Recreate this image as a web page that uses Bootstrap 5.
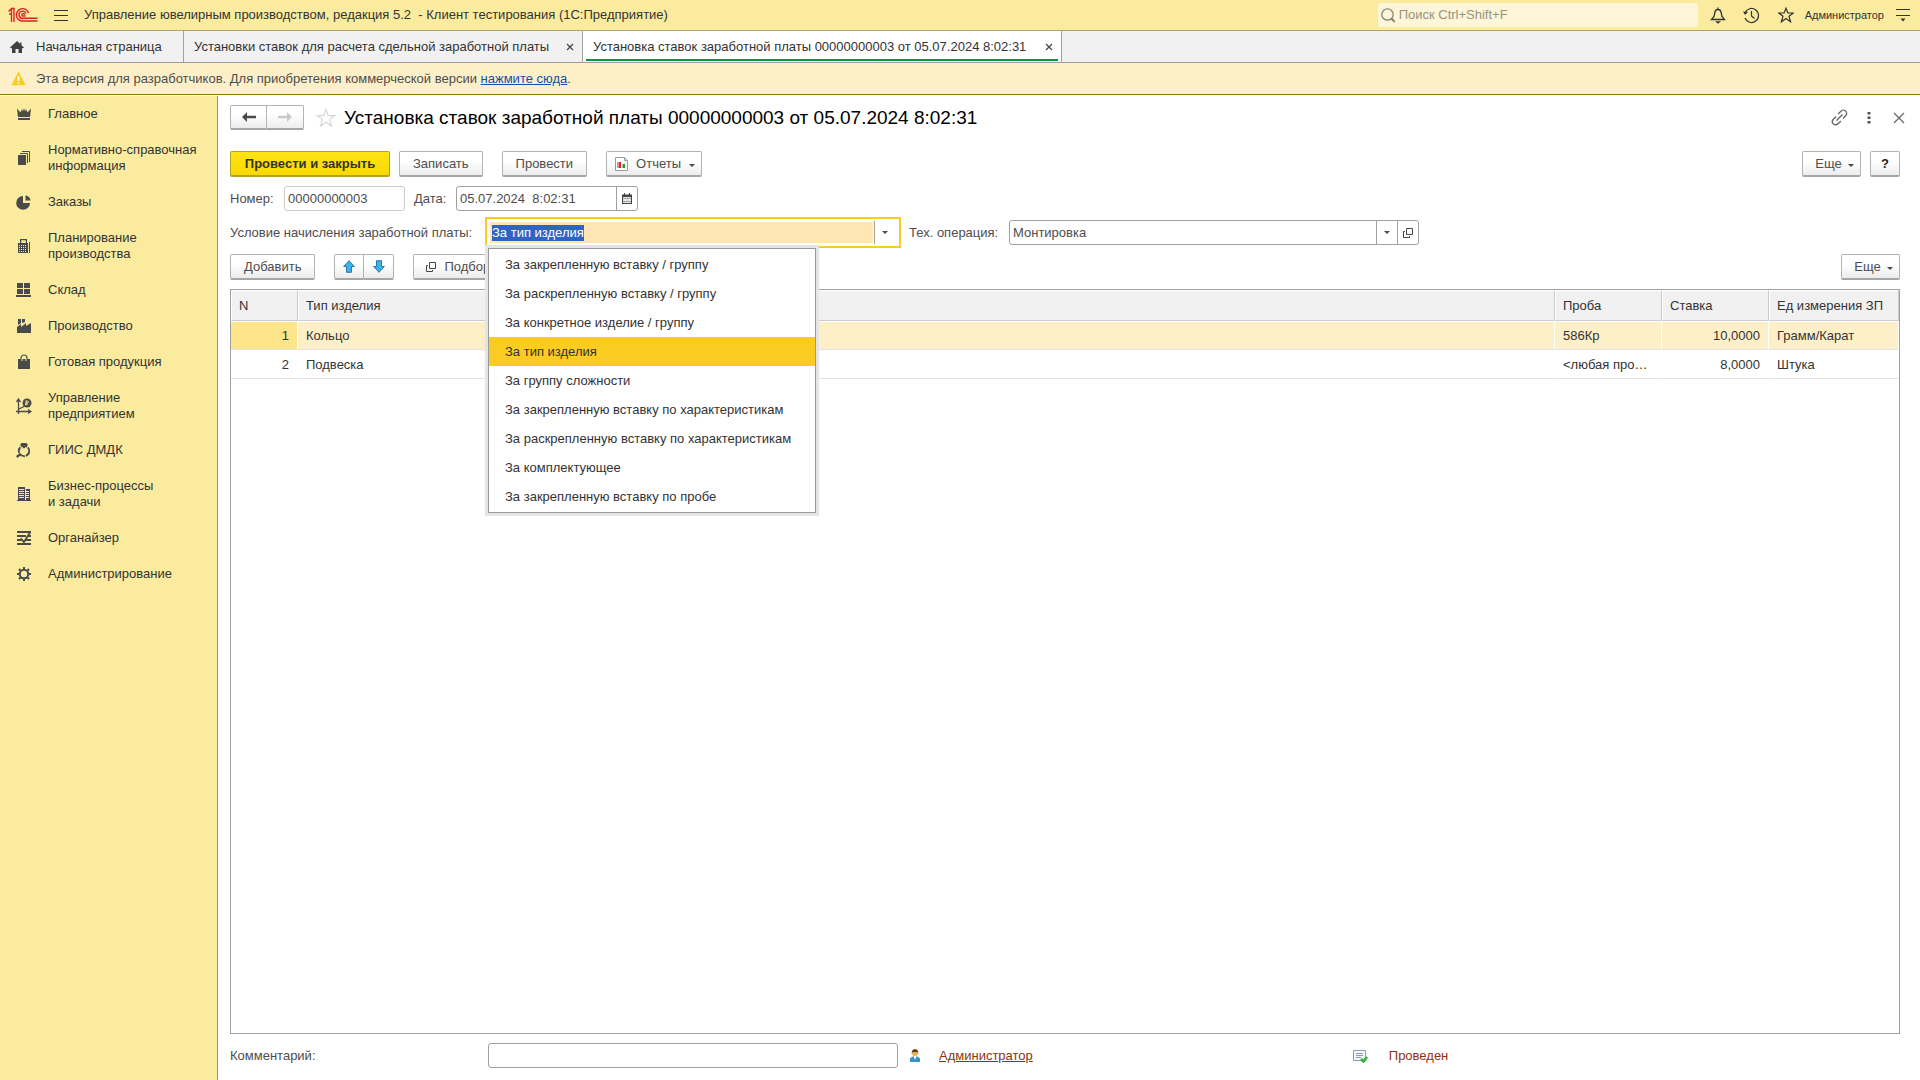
<!DOCTYPE html>
<html lang="ru">
<head>
<meta charset="utf-8">
<meta name="viewport" content="width=device-width, initial-scale=1">
<title>Управление ювелирным производством</title>
<link href="https://cdn.jsdelivr.net/npm/bootstrap@5.3.0/dist/css/bootstrap.min.css" rel="stylesheet">
<style>
:root{--ink:#333;--soft:#4d4d4d;--line:#a0a0a0;--yellow:#faeb9e;--accent:#facb20}
body{font:13px/16px "Liberation Sans",Arial,sans-serif;color:var(--ink);background:#fff}
svg{display:block;flex:none}
button,input{font:inherit;color:inherit}
.plain{background:none;border:0;padding:0;color:#404040}
.topbar{height:31px;background:var(--yellow);border-bottom:1px solid #b0a469;padding:0 10px 0 8px}
.search{width:320px;height:24px;background:#fdf6d8;border-radius:2px;padding-left:3px;margin-right:3px;color:#8c8770}
.search input{background:none;border:0;outline:0;padding:0;line-height:16px}
.search input::placeholder{color:#98937c;opacity:1}
.cell{width:34px;display:flex;justify-content:center;align-items:center}
.tools{margin-right:-14px}
.tools .cell{width:30px}
.user{font-size:11px;margin:0 12px 0 2px}
.tabs{height:32px;background:#f1f1f1;border-bottom:1px solid var(--line)}
.tab{position:relative;border-right:1px solid var(--line);color:var(--ink);text-decoration:none;min-width:184px;padding:0 8px 0 10px}
.tab-list{min-width:399px}
.tab-doc{min-width:479px}
.tab.active{background:#fff}
.tab.active::after{content:"";position:absolute;left:3px;right:3px;bottom:1px;height:2px;background:#009646}
.notice{height:32px;background:#fdf0c8;border-bottom:1px solid #94760f;padding-left:11px;gap:10px;color:var(--soft)}
.notice a{color:#1450a8}
.side{width:218px;background:var(--yellow);border-right:1px solid #9b9266;margin-top:1px}
.side a{display:flex;align-items:center;gap:16px;padding:10px 8px 10px 16px;color:var(--ink);text-decoration:none}
.side svg{fill:#4a4a4a}
.work{padding:10px 20px 12px 12px;min-width:0}
.after-title{margin-top:21px}
.form-row{margin-top:6px}
.gap-top{margin-top:9px}
.near{margin-left:9px}
.far{margin-left:19px}
.cmd{height:26px;padding:0 13px;border:1px solid #b3b3b3;border-bottom:2px solid #a6a6a6;border-radius:2px;background:linear-gradient(#fff 40%,#ececec);color:var(--soft);display:flex;align-items:center;justify-content:center;gap:6px;white-space:nowrap}
.cmd.main{background:linear-gradient(#ffe313,#f8d800);border-color:#b3a125;color:var(--ink);font-weight:700;width:160px}
.cmd.more{width:59px;padding:0 0 0 6px}
.cmd.help{width:30px;padding:0;color:#222;font-weight:700}
.cmd.pic{padding:0 6px 0 8px;gap:8px}
.arrow{border:3px solid transparent;border-top-color:#4a4a4a;border-bottom:0}
.cmd .arrow{margin-top:3px}
.pair .cmd{width:30px;padding:0}
.pair .cmd:first-child{border-radius:2px 0 0 2px}
.pair .cmd:last-child{border-left:0;border-radius:0 2px 2px 0}
.nav-pair .cmd{width:37px;height:25px}
.doc-title{font-size:19px;line-height:22px;font-weight:400;color:#000;margin:0}
.label{color:var(--soft);white-space:nowrap}
.label-num{width:46px}
.label-date{width:34px}
.label-cond{width:247px}
.label-op{width:92px}
.label-note{width:258px}
.box{height:25px;border:1px solid var(--line);border-radius:3px;background:#fff;color:var(--soft);display:flex;align-items:stretch}
.box input{border:0;outline:0;background:none;padding:0 4px 0 3px;min-width:0;flex:1}
.box button{border:0;border-left:1px solid var(--line);background:none;width:21px;padding:0;display:flex;align-items:center;justify-content:center}
.box.quiet{border-color:#ccc}
.box-num{width:121px}
.box-date{width:182px}
.box-wide{width:410px}
.combo{position:relative;width:416px;height:31px;border:2px solid var(--accent);padding:3px;display:flex}
.combo input{flex:1;min-width:0;border:0;outline:0;padding:0 2px;background:#ffe6b3;color:var(--soft)}
.combo input::selection{background:#3163c5;color:#fff}
.combo>button{border:0;border-left:1px solid var(--line);background:none;margin:-1px 0 -1px 1px;width:22px;display:flex;align-items:center;justify-content:center;padding:0 2px 0 0}
.choices{position:absolute;z-index:5;left:1px;top:29px;width:328px;margin:0;padding:1px 0;list-style:none;background:#fff;border:1px solid #999;box-shadow:0 0 0 3px #e5e5e5;color:var(--ink)}
.choices li{height:29px;line-height:29px;padding-left:16px}
.choices li[aria-selected=true]{background:var(--accent)}
.grid{border:1px solid var(--line)}
.grid table{width:100%;table-layout:fixed;border-collapse:separate;border-spacing:0}
.grid th{height:31px;font-weight:400;background:#f1f1f1;border:1px solid #fff;border-right-color:#c9cccb;border-bottom-color:#c9cccb;padding:0 7px}
.grid td{height:29px;border:1px solid #fff;border-bottom-color:#e3e3e3;border-left:0;padding:0 8px;overflow:hidden;text-overflow:ellipsis;white-space:nowrap}
.grid tr.picked td{background:#fdf0c8;background-clip:padding-box}
.grid tr.picked td:first-child{background-color:#fce58b}
.col-n{width:67px}
.col-value{width:107px}
.col-unit{width:130px}
.foot a,.status{color:#8c3210}
.author{margin-left:12px;gap:19px}
.status{margin-left:320px;gap:21px}
</style>
</head>
<body class="d-flex flex-column min-vh-100">
<header>
  <div class="topbar d-flex align-items-center">
    <svg width="30" height="16" viewBox="0 0 30 16" fill="none" stroke="#d8232a" stroke-width="1.4"><path d="M.5 4.500 3.500 1.700V15M1 7h2.500M3.500 1.500H6V15"/><path d="M20.500 6A6.200 6.200 0 1 0 15.500 14H29.500"/><path d="M18 6.500A3.600 3.600 0 1 0 15.500 11.300H29.500M16.500 7.800A1.300 1.300 0 1 0 15.500 9H17.500"/></svg>
    <button class="plain ms-3" aria-label="Меню"><svg width="14" height="13" stroke="#333" stroke-width="1"><path d="M0 1.500h14M0 6.500h14M0 11.500h14"/></svg></button>
    <span class="ms-3">Управление ювелирным производством, редакция 5.2 &nbsp;- Клиент тестирования (1С:Предприятие)</span>
    <div class="ms-auto d-flex align-items-center">
      <label class="search d-flex align-items-center gap-1"><svg width="14" height="15" fill="none" stroke="#8c8770" stroke-width="1.300"><circle cx="6.500" cy="6.500" r="5.700"/><path d="M10.500 10.500 14 14" stroke-width="2.200"/></svg><input type="search" placeholder="Поиск Ctrl+Shift+F" aria-label="Поиск"></label>
      <button class="plain cell" aria-label="Уведомления"><svg width="16" height="17" fill="none" stroke="#333" stroke-width="1.300"><path d="M1.500 12.500h13L12 9.500 11 5Q10.500 2.500 8 2.500T5 5L4 9.500ZM8 .5v2"/><path d="M5 14.300h6L8 16.700z" fill="#333" stroke="none"/></svg></button>
      <button class="plain cell" aria-label="История"><svg width="17" height="17" fill="none" stroke="#333" stroke-width="1.200"><path d="M2 6a7 7 0 1 1 0 5M8.500 4v5l3 2.500"/><path d="M0 4.500 5 5 2 8z" fill="#333" stroke="none"/></svg></button>
      <button class="plain cell" aria-label="Избранное"><svg width="16" height="16" fill="none" stroke="#333" stroke-width="1.200"><path d="M8 1.200 9.900 6H15.200L11 9.300 12.600 14.800 8 11.500 3.400 14.800 5 9.300.8 6H6.100Z"/></svg></button>
      <span class="user">Администратор</span>
      <button class="plain" aria-label="Настройки"><svg width="14" height="14"><path d="M0 1.500h14M0 7.500h14" stroke="#333"/><path d="M4.500 10.500h5L7 13.500z" fill="#333"/></svg></button>
    </div>
  </div>
  <nav class="tabs d-flex align-items-stretch">
    <a href="#" class="tab d-flex align-items-center"><svg width="14" height="14" fill="#404040"><path d="M7 1 0 7.500 1.200 8.500 2 7.800V13H5.500V9H8.500V13H12V7.800L12.800 8.500 14 7.500 11.500 5.200V2.500H10V3.800Z"/></svg><span class="ps-2 ms-1">Начальная страница</span></a>
    <a href="#" class="tab tab-list d-flex align-items-center justify-content-between"><span>Установки ставок для расчета сдельной заработной платы</span><svg width="8" height="8" stroke="#444" stroke-width="1.200"><path d="m1 1 6 6M7 1 1 7"/></svg></a>
    <a href="#" class="tab tab-doc active d-flex align-items-center justify-content-between" aria-current="page"><span>Установка ставок заработной платы 00000000003 от 05.07.2024 8:02:31</span><svg width="8" height="8" stroke="#444" stroke-width="1.200"><path d="m1 1 6 6M7 1 1 7"/></svg></a>
  </nav>
  <div class="notice d-flex align-items-center"><svg width="15" height="15"><path d="M7.500.5 14.700 14.200H.3Z" fill="#facb20"/><path d="M7.500 5v5M7.500 11.200v1.600" stroke="#fff" stroke-width="1.700"/></svg><span>Эта версия для разработчиков. Для приобретения коммерческой версии <a href="#">нажмите сюда</a>.</span></div>
</header>
<div class="d-flex flex-grow-1">
  <nav class="side flex-shrink-0">
    <a href="#"><svg width="16" height="16"><path d="M1 2.500 4.500 6.500 6 3 7 5.500 8 2 9 5.500 10 3 11.500 6.500 15 2.500 14 11H2ZM2 12h12v2H2z"/></svg>Главное</a>
    <a href="#"><svg width="16" height="16"><path d="M2 5h8v10H2z"/><path d="M4 3.500h7.500V13M6 1.500h7.500V12" fill="none" stroke="#4a4a4a"/></svg><span>Нормативно-справочная<br>информация</span></a>
    <a href="#"><svg width="16" height="16"><path d="M7 2v7h7A6.900 6.900 0 1 1 7 2Z"/><path d="M9.500 1.500A6 6 0 0 1 14.500 6.500H9.500Z"/></svg>Заказы</a>
    <a href="#"><svg width="16" height="16"><path d="M4 1h7v4H12V15H2V5h2Zm1.200 1.200V5h4.600V2.200Z" fill-rule="evenodd"/><path d="M13.500 4v11" stroke="#4a4a4a"/><path d="M3 7.500h8M3 9.500h8M3 11.500h8M3 13.500h8" stroke="#faeb9e" stroke-dasharray="1 1"/></svg><span>Планирование<br>производства</span></a>
    <a href="#"><svg width="16" height="16"><path d="M1 1h6v5H1zM8 1h6v5H8zM1 7h6v5H1zM8 7h6v5H8zM0 13h15v2H0z"/></svg>Склад</a>
    <a href="#"><svg width="16" height="16"><path d="M1 15V9l4-3v3l5-4v3l5-3v10ZM2 1h3v4L2 7ZM6 1h3v3L6 5Z"/></svg>Производство</a>
    <a href="#"><svg width="16" height="16"><path d="M2 5h12v10H2z"/><path d="M5 7V4a3 3 0 0 1 6 0v3" fill="none" stroke="#4a4a4a" stroke-width="1.200"/><path d="M6 5v2M10 5v2" stroke="#faeb9e"/></svg>Готовая продукция</a>
    <a href="#"><svg width="16" height="16" fill="none"><path d="M2.500 1v15M0 13.500h15M.5 4l2-3 2 3M12 11.500l3 2-3 2M3 11l4-2 3-2" fill="none" stroke="#4a4a4a" stroke-width="1.300"/><circle cx="11" cy="5" r="4.500" fill="#4a4a4a"/><path d="M10 2.500v5M10 3h1.500q2 1 0 2H10M9 6h3" fill="none" stroke="#faeb9e"/></svg><span>Управление<br>предприятием</span></a>
    <a href="#"><svg width="16" height="16"><circle cx="8" cy="9" r="5.200" fill="none" stroke="#4a4a4a" stroke-width="1.800" stroke-dasharray="6 1"/><path d="M5.500 1h5L12 3 8 6.500 4 3ZM0 14 4 11l1.500 1.500L1.500 16Z"/></svg>ГИИС ДМДК</a>
    <a href="#"><svg width="16" height="16"><path d="M2 1h7v13H2zM10 3h4v11h-4zM1 14h14v1H1z"/><path d="M3 3.500h5M3 5.500h5M3 7.500h5M3 9.500h5M3 11.500h5M10 5.500h3M10 7.500h3M10 9.500h3M10 11.500h3" stroke="#faeb9e"/></svg><span>Бизнес-процессы<br>и задачи</span></a>
    <a href="#"><svg width="16" height="16"><path d="M1 2h14M1 6h9M12 6h3M1 10h4M10 10h5M1 14h14" stroke="#4a4a4a" stroke-width="2"/><path d="M4.500 8.500 8 12 14 2.500" fill="none" stroke="#4a4a4a" stroke-width="1.800"/></svg>Органайзер</a>
    <a href="#"><svg width="16" height="16"><circle cx="8" cy="8" r="4.200" fill="none" stroke="#4a4a4a" stroke-width="2"/><path d="M8 1v3M8 12v3M1 8h3M12 8h3M3 3l2 2M11 11l2 2M13 3l-2 2M5 11l-2 2" stroke="#4a4a4a" stroke-width="2"/></svg>Администрирование</a>
  </nav>
  <main class="work flex-grow-1 d-flex flex-column">
    <div class="d-flex align-items-center">
      <div class="pair nav-pair d-flex"><button class="cmd" aria-label="Назад"><svg width="14" height="10"><path d="M0 5 5 0V3.700H14V6.300H5V10Z" fill="#4a4a4a"/></svg></button><button class="cmd" aria-label="Вперед"><svg width="14" height="10"><path d="M14 5 9 0V3.700H0V6.300H9V10Z" fill="#c9c9c9"/></svg></button></div>
      <button class="plain ms-2 ps-1" aria-label="В избранное"><svg width="20" height="20" fill="none" stroke="#d5d9dc" stroke-width="1.200"><path d="M10 1.500 12.200 7.700H18.700L13.500 11.500 15.500 18 10 14.200 4.500 18 6.500 11.500 1.300 7.700H7.800Z"/></svg></button>
      <h1 class="doc-title ms-2">Установка ставок заработной платы 00000000003 от 05.07.2024 8:02:31</h1>
      <div class="tools ms-auto d-flex align-items-center">
        <button class="plain cell" aria-label="Ссылка"><svg width="17" height="17" fill="none" stroke="#666" stroke-width="1.300"><path d="M7 5 10 2.200A3 3 0 0 1 14.800 6.500L12 9.500M10 12 7 14.800A3 3 0 0 1 2.200 10.500L5 7.500M5.500 11.500l6-6" /></svg></button>
        <button class="plain cell" aria-label="Действия"><svg width="4" height="13" fill="#555"><path d="M.5 1h3v2.500h-3zM.5 5.500h3V8h-3zM.5 10h3v2.500h-3z"/></svg></button>
        <button class="plain cell" aria-label="Закрыть"><svg width="12" height="12" stroke="#666" stroke-width="1.200"><path d="m1 1 10 10M11 1 1 11"/></svg></button>
      </div>
    </div>
    <div class="d-flex align-items-center after-title">
      <button class="cmd main">Провести и закрыть</button>
      <button class="cmd near">Записать</button>
      <button class="cmd far">Провести</button>
      <button class="cmd pic far"><svg width="13" height="14"><path d="M.5.5h9l3 3v10H.5Z" fill="#fff" stroke="#8c9cac"/><path d="M9.500.5v3h3" fill="none" stroke="#8c9cac"/><path d="M2 5h1v6H2z" fill="#aaa"/><path d="M3.500 5H6v6H3.500z" fill="#e5232a"/><path d="M7.500 7H10v4H7.500z" fill="#1c9b3a"/></svg>Отчеты<i class="arrow"></i></button>
      <button class="cmd more ms-auto">Еще<i class="arrow"></i></button>
      <button class="cmd help near" aria-label="Справка">?</button>
    </div>
    <div class="d-flex align-items-center gap-top">
      <label class="label label-num" for="num">Номер:</label>
      <div class="box box-num quiet ms-2"><input id="num" value="00000000003" readonly></div>
      <label class="label label-date near" for="date">Дата:</label>
      <div class="box box-date ms-2"><input id="date" value="05.07.2024  8:02:31"><button aria-label="Календарь"><svg width="10" height="11"><path d="M0 1.500h10V11H0z" fill="#444"/><path d="M2.500 0v2M7.500 0v2" stroke="#444"/><path d="M1 4h8v6H1z" fill="#fff"/><path d="M1.500 5.500h7M1.500 8.500h7" stroke="#444" stroke-width="1.500" stroke-dasharray="1 1"/></svg></button></div>
    </div>
    <div class="d-flex align-items-center form-row">
      <label class="label label-cond" for="cond">Условие начисления заработной платы:</label>
      <div class="combo ms-2">
        <input id="cond" role="combobox" aria-expanded="true" aria-controls="condList" value="За тип изделия" autofocus>
        <button aria-label="Открыть список"><i class="arrow"></i></button>
        <ul class="choices" id="condList" role="listbox">
          <li role="option">За закрепленную вставку / группу</li>
          <li role="option">За раскрепленную вставку / группу</li>
          <li role="option">За конкретное изделие / группу</li>
          <li role="option" aria-selected="true">За тип изделия</li>
          <li role="option">За группу сложности</li>
          <li role="option">За закрепленную вставку по характеристикам</li>
          <li role="option">За раскрепленную вставку по характеристикам</li>
          <li role="option">За комплектующее</li>
          <li role="option">За закрепленную вставку по пробе</li>
        </ul>
      </div>
      <label class="label label-op ms-2" for="op">Тех. операция:</label>
      <div class="box box-wide ms-2"><input id="op" value="Монтировка"><button aria-label="Выбрать"><i class="arrow"></i></button><button aria-label="Открыть"><svg width="10" height="10" fill="none" stroke="#444"><path d="M3.500.5h6v6h-6zM2 3.500H.5v6h6V8"/></svg></button></div>
    </div>
    <div class="d-flex align-items-center form-row">
      <button class="cmd">Добавить</button>
      <div class="pair d-flex far"><button class="cmd" aria-label="Вверх"><svg width="12" height="13"><path d="M6 .7 11.300 6.500H8.500V12.300H3.500V6.500H.7Z" fill="#3fb0ee" stroke="#2b78a8"/></svg></button><button class="cmd" aria-label="Вниз"><svg width="12" height="13"><path d="M6 12.300 11.300 6.500H8.500V.7H3.500V6.500H.7Z" fill="#3fb0ee" stroke="#2b78a8"/></svg></button></div>
      <button class="cmd pic far"><svg class="ms-1" width="10" height="10" fill="none" stroke="#444"><path d="M3.500.5h6v6h-6zM2 3.500H.5v6h6V8"/></svg>Подбор</button>
      <button class="cmd more ms-auto">Еще<i class="arrow"></i></button>
    </div>
    <div class="grid flex-grow-1 gap-top">
      <table>
        <colgroup><col class="col-n"><col><col class="col-value"><col class="col-value"><col class="col-unit"></colgroup>
        <thead><tr><th>N</th><th>Тип изделия</th><th>Проба</th><th>Ставка</th><th>Ед измерения ЗП</th></tr></thead>
        <tbody>
          <tr class="picked"><td class="text-end">1</td><td>Кольцо</td><td>586Кр</td><td class="text-end">10,0000</td><td>Грамм/Карат</td></tr>
          <tr><td class="text-end">2</td><td>Подвеска</td><td>&lt;любая проба&gt;</td><td class="text-end">8,0000</td><td>Штука</td></tr>
        </tbody>
      </table>
    </div>
    <div class="foot d-flex align-items-center gap-top">
      <label class="label label-note" for="note">Комментарий:</label>
      <div class="box box-wide"><input id="note"></div>
      <div class="author d-flex align-items-center">
        <svg width="10" height="13"><path d="M0 13V9.500L2.500 7.500H7.500L10 9.500V13Z" fill="#3c92c8"/><path d="M4 7h2v2L5 10.500 4 9Z" fill="#fff"/><circle cx="5" cy="4" r="3" fill="#e8b04c"/><path d="M1.800 5V2.500Q2.500 0 5 0T8.200 2.500V5L7.500 3H2.500Z" fill="#5a3a1c"/></svg>
        <a href="#">Администратор</a>
      </div>
      <div class="status d-flex align-items-center"><svg width="15" height="14"><path d="M.5 1.500h12v10H.5z" fill="#f5f8fb" stroke="#8c9cb4"/><path d="M3 4.500h7M3 6.500h7M3 8.500h5" stroke="#8c9cb4"/><path d="m8 10 2.500 2.500L14 8" fill="none" stroke="#28b43c" stroke-width="2.500"/></svg><span>Проведен</span></div>
    </div>
  </main>
</div>
<script src="https://cdn.jsdelivr.net/npm/bootstrap@5.3.0/dist/js/bootstrap.bundle.min.js"></script>
<script>
const cond = document.getElementById('cond');
cond.focus();
cond.select();
</script>
</body>
</html>
